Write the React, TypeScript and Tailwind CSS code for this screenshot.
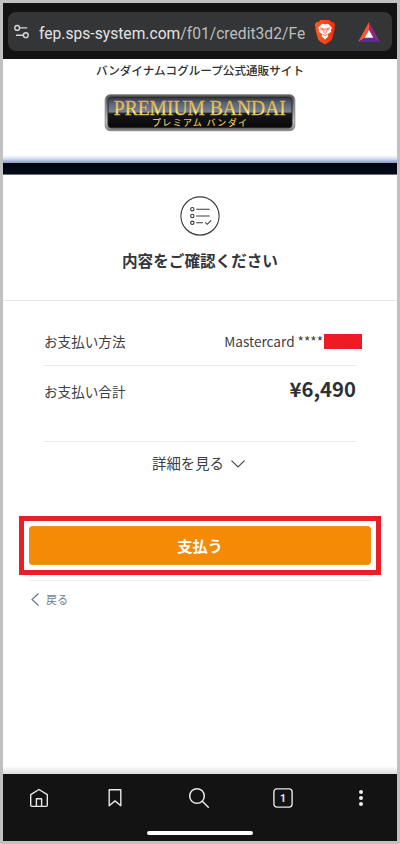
import React from "react";

const jp = "font-['Noto_Sans_CJK_JP',sans-serif]";

function AddressBar() {
  return (
    <header className="h-14 shrink-0 bg-[#131313] pl-[5px] pr-[5px] pt-[9px]">
      <div className="flex h-[39px] items-center rounded-[8px] bg-[#343537] pl-[5px]">
        <svg width="18" height="18" viewBox="0 0 18 18" fill="none" stroke="#d6d6d6" strokeWidth="1.4" className="shrink-0">
          <circle cx="4.2" cy="4.9" r="2.4" />
          <path d="M6.8 4.9h7.4M3 12.2h7.2" />
          <circle cx="12.8" cy="12.2" r="2.4" />
        </svg>
        <div className="ml-2 w-[267px] shrink-0 overflow-hidden whitespace-nowrap pt-[4px] font-[Roboto,sans-serif] text-[15.6px] leading-5 tracking-[0.02px] text-[#bdbdbd]">
          <span className="text-[#e4e4e4]">fep.sps-system.com</span>/f01/credit3d2/Fe
        </div>
        <svg width="22" height="26" viewBox="0 0 22 26" className="ml-[8px] shrink-0">
          <defs>
            <linearGradient id="lion" x1="0" x2="1">
              <stop offset="0" stopColor="#ff5a20" />
              <stop offset="1" stopColor="#f92d08" />
            </linearGradient>
          </defs>
          <path d="M6.5 1h9l2.2 2.3 2-.2 1.5 3.2-.8 2 .4 1.3-2.7 10.2c-.3 1-1 1.8-1.8 2.4L11 25.5l-5.3-3.3c-.8-.6-1.5-1.4-1.8-2.4L1.2 9.6l.4-1.3-.8-2 1.5-3.2 2 .2z" fill="url(#lion)" />
          <path d="M8 4.7l3 .6 3-.6 3.9 4-1.1 2.4.5 1.6-3.6 2.6.7 1.9-3.4 3.2-3.4-3.2.7-1.9-3.6-2.6.5-1.6-1.1-2.4z" fill="#fff" />
          <path d="M5.9 8.8l3.2.7-.3 1.6-2.3-.5M16.1 8.8l-3.2.7.3 1.6 2.3-.5M10.3 9.5l-.6 3.6 1.3 1.5 1.3-1.5-.6-3.6M8.6 15.4l2.4 1.1 2.4-1.1" fill="none" stroke="#f9461a" strokeWidth=".8" />
        </svg>
        <svg width="22" height="20" viewBox="0 0 22 20" className="ml-[22px] shrink-0">
          <path d="M11 0 0 20l7.2-4.3L11 8z" fill="#fa5238" />
          <path d="M11 0l11 20-7.2-4.3L11 8z" fill="#8c2a83" />
          <path d="M0 20h22l-7.2-4.3H7.2z" fill="#5a2b91" />
          <path d="M11 8l4.3 7.8H6.7z" fill="#fff" />
        </svg>
      </div>
    </header>
  );
}

function Logo() {
  return (
    <svg width="192" height="38" viewBox="0 0 192 38" className="mx-auto mt-[14px] block">
      <defs>
        <linearGradient id="rim" x1="0" y1="0" x2="0" y2="1">
          <stop offset="0" stopColor="#555" />
          <stop offset=".35" stopColor="#858585" />
          <stop offset=".75" stopColor="#c4c4c4" />
          <stop offset="1" stopColor="#777" />
        </linearGradient>
        <linearGradient id="glass" x1="0" y1="0" x2="0" y2="1">
          <stop offset="0" stopColor="#303640" />
          <stop offset=".2" stopColor="#566277" />
          <stop offset=".48" stopColor="#7a8291" />
          <stop offset=".54" stopColor="#17171a" />
          <stop offset="1" stopColor="#080808" />
        </linearGradient>
        <linearGradient id="gold" x1="0" y1="0" x2="0" y2="1">
          <stop offset=".2" stopColor="#deb038" />
          <stop offset=".5" stopColor="#e8c763" />
          <stop offset=".68" stopColor="#fff58f" />
          <stop offset=".85" stopColor="#d6ac30" />
        </linearGradient>
      </defs>
      <rect x="1.2" y=".7" width="189.6" height="36" rx="5" fill="url(#rim)" stroke="#8a8a8a" />
      <rect x="4" y="3.2" width="184" height="30.6" rx="3.5" fill="url(#glass)" stroke="#252525" />
      <text x="9.8" y="21" textLength="172" lengthAdjust="spacingAndGlyphs" fill="url(#gold)" stroke="#deb544" strokeWidth=".3" className="font-['Liberation_Serif',serif] text-[21.5px]">PREMIUM BANDAI</text>
      <text x="48" y="31.8" textLength="95" fill="#e3c254" className="font-['Noto_Sans_CJK_JP',sans-serif] text-[9px] font-medium">プレミアム バンダイ</text>
    </svg>
  );
}

function BottomNav() {
  return (
    <nav className="h-[67px] shrink-0 bg-[#131313]">
      <div className="flex h-[47px] items-center justify-between pl-[26px] pr-[23px]">
        <svg width="20" height="20" viewBox="0 0 20 20" fill="none" stroke="#e8e8e8" strokeWidth="1.4" strokeLinejoin="round">
          <path d="M1.7 6.6 10 1.5l8.3 5.1v10.7c0 .7-.4 1.1-1.1 1.1H2.8c-.7 0-1.1-.4-1.1-1.1zM7.4 18.3v-7.6h5.2v7.6" />
        </svg>
        <svg width="16" height="20" viewBox="0 0 16 20" fill="none" stroke="#e8e8e8" strokeWidth="1.4" strokeLinejoin="round" className="ml-[7px]">
          <path d="M2.2 1.7h11.6v16L8 12.9l-5.8 4.8z" />
        </svg>
        <svg width="22" height="22" viewBox="0 0 22 22" fill="none" stroke="#e8e8e8" strokeWidth="1.5" strokeLinecap="round" className="ml-[15px]">
          <circle cx="9" cy="9" r="7.3" />
          <path d="m14.3 14.3 6 6" />
        </svg>
        <svg width="20" height="20" viewBox="0 0 20 20" className="ml-[12px]">
          <rect x=".9" y=".9" width="18.2" height="18.2" rx="3" fill="none" stroke="#e8e8e8" strokeWidth="1.4" />
          <text x="10" y="13.8" textAnchor="middle" fill="#e8e8e8" className="font-[Roboto,sans-serif] text-[10.5px] font-bold">1</text>
        </svg>
        <div className="ml-[11px] flex w-[20px] flex-col items-center gap-[2px] pr-[6px]">
          <i className="h-1 w-1 rounded-full bg-[#eee]" />
          <i className="h-1 w-1 rounded-full bg-[#eee]" />
          <i className="h-1 w-1 rounded-full bg-[#eee]" />
        </div>
      </div>
      <div className="mx-auto mt-[10px] h-1 w-[106px] rounded-full bg-white" />
    </nav>
  );
}

export default function App() {
  return (
    <div className={"flex h-[844px] w-[400px] flex-col overflow-hidden border-[3px] border-[#c1c1c1] bg-white text-[#3d4045] " + jp}>
      <AddressBar />
      <div className="h-[96px] shrink-0 pt-px">
        <div className="h-5 whitespace-nowrap text-center text-[11.6px] font-medium leading-5 text-[#303030]">バンダイナムコグループ公式通販サイト</div>
        <Logo />
      </div>
      <div className="h-2 shrink-0 bg-linear-to-b from-white via-[#d2dbef] to-[#8796bf]" />
      <div className="h-3 shrink-0 border-b border-[#6c6f7d] bg-linear-to-b from-[#00030f] to-[#020b17]" />
      <section className="h-[126px] shrink-0 border-b border-[#e6e9ec] pt-[21px]">
        <svg width="40" height="40" viewBox="0 0 40 40" fill="none" stroke="#3b3b3b" strokeWidth="1.1" className="mx-auto block">
          <circle cx="20" cy="20" r="19.1" />
          <circle cx="12.3" cy="13.2" r="1.7" />
          <circle cx="12.3" cy="20" r="1.7" />
          <circle cx="12.3" cy="26.8" r="1.7" />
          <path d="M16.2 13.2h13.4M16.2 20h13.4M16.2 26.8H23M25.2 26.3l2 2 4-4" />
        </svg>
        <h1 className="mt-[12px] text-center text-[15.6px] font-bold leading-6 text-[#33363c]">内容をご確認ください</h1>
      </section>
      <main className="flex-1">
        <div className="mx-[41px]">
          <div className="flex h-[65px] items-center border-b border-[#e6eaee] pt-[17px] text-[13.6px]">
            <span>お支払い方法</span>
            <span className="ml-auto whitespace-nowrap">Mastercard ****</span>
            <span className="-mr-[6px] ml-px h-[15px] w-[38px] bg-[#ed1c24]" />
          </div>
          <div className="flex h-[76px] items-start justify-between border-b border-[#e8ebef]">
            <span className="pt-[15px] text-[13.6px] leading-5">お支払い合計</span>
            <strong className="pt-[6px] text-[20.3px] font-bold leading-8 text-[#2d3034]">¥6,490</strong>
          </div>
        </div>
        <div className="mt-[9px] flex h-6 items-center justify-center gap-[7px] pr-[3px] text-[14.4px] leading-6">
          詳細を見る
          <svg width="14" height="8" viewBox="0 0 14 8" fill="none" stroke="#454545" strokeWidth="1.2" className="mt-[2px]"><path d="M.5.6 7 7 13.5.6" /></svg>
        </div>
        <div className="mx-[16px] mt-[41px] h-[59px] border-[5px] border-[#e81f27] p-[5px]">
          <button className="block h-[39px] w-full rounded-[3px] border border-[#e99626] bg-[#f48a05] text-[15.2px] font-bold leading-[37px] text-white">支払う</button>
        </div>
        <div className="mx-[26px] mt-[5px] flex h-[38px] items-center gap-[7px] border-t border-[#eeeeee] pl-[2px] text-[11px] text-[#718096]">
          <svg width="8" height="13" viewBox="0 0 8 13" fill="none" stroke="#64748b" strokeWidth="1.1"><path d="M7.5.5 1 6.5l6.5 6" /></svg>
          戻る
        </div>
      </main>
      <div className="h-2 shrink-0 bg-linear-to-b from-white to-[#dedede]" />
      <BottomNav />
    </div>
  );
}
